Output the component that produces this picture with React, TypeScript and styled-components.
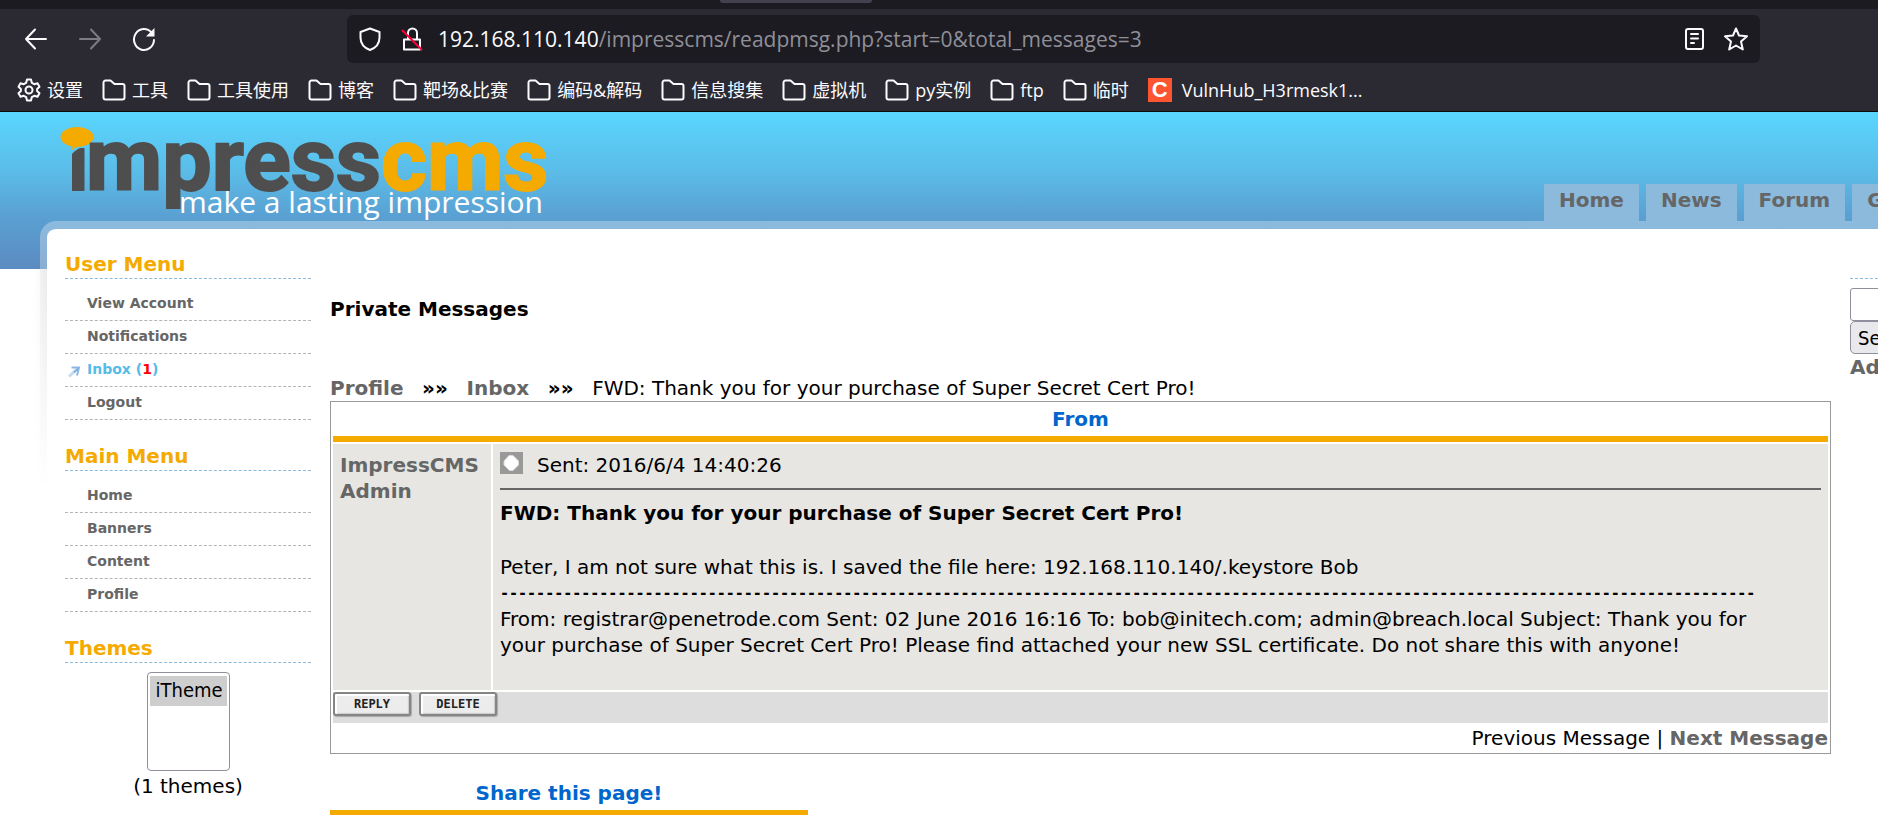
import React from "react";
import styled, { createGlobalStyle, css } from "styled-components";

const sans = `"DejaVu Sans", Verdana, sans-serif`;
const compact = `"DejaVu Sans Condensed", Tahoma, "DejaVu Sans", sans-serif`;
const chromeFont = `"Open Sans", "Noto Sans CJK SC", sans-serif`;

const GlobalStyle = createGlobalStyle`
  *, *::before, *::after { box-sizing: border-box; }
  html { overflow: hidden; background: #fff; }
  body { margin: 0; font: 20px/26px ${sans}; color: #000; background: #fff; }
  h1, h2, h3, p, ul { margin: 0; padding: 0; }
  a { color: inherit; text-decoration: none; }
  ul { list-style: none; }
`;

/* Browser frame */
const Chrome = styled.header`
  background: #2b2a33;
  border-bottom: 1px solid #0c0c0d;
  color: #fbfbfe;
  font-family: ${chromeFont};
`;
const TabStrip = styled.div`
  display: flex;
  justify-content: center;
  height: 9px;
  padding-right: 286px;
  background: #1c1b22;
`;
const TabEdge = styled.div`
  width: 152px;
  height: 3px;
  background: #42414d;
  border-radius: 0 0 4px 4px;
`;
const Toolbar = styled.div`
  display: flex;
  align-items: center;
  padding: 6px 118px 6px 20px;
`;
const NavButtons = styled.div`
  display: flex;
  gap: 22px;
  width: 327px;
`;
const IconButton = styled.button<{ $dim?: boolean }>`
  display: flex;
  flex: none;
  align-items: center;
  justify-content: center;
  width: 32px;
  height: 32px;
  padding: 0;
  border: 0;
  background: none;
  color: ${(p) => (p.$dim ? "#7d7c84" : "#fbfbfe")};
`;
const AddressBar = styled.div`
  display: flex;
  flex: 1;
  align-items: center;
  gap: 10px;
  height: 48px;
  padding: 0 8px 0 7px;
  border-radius: 6px;
  background: #1c1b22;
`;
const Address = styled.div`
  flex: 1;
  font-size: 21px;
  color: #8f8f98;
  white-space: nowrap;
`;
const Host = styled.span`
  color: #fbfbfe;
`;
const Bookmarks = styled.nav`
  display: flex;
  align-items: center;
  gap: 19px;
  height: 42px;
  padding: 0 17px;
`;
const Bookmark = styled.a`
  display: flex;
  align-items: center;
  gap: 6px;
  font-size: 18px;
  line-height: 24px;
  white-space: nowrap;
`;
const SiteBadge = styled.span`
  display: flex;
  align-items: center;
  justify-content: center;
  width: 24px;
  height: 24px;
  margin-right: 4px;
  background: #fc5531;
  color: #fff;
  font: bold 22px/24px "Liberation Sans", sans-serif;
`;

/* Site */
const Site = styled.div`
  overflow: hidden;
  background: linear-gradient(#59d6ff, #5bbce8 38%, #5a9fd1 68%, #5b8bc1) 0 0 / 100% 157px no-repeat;
`;
const Banner = styled.div`
  display: flex;
  justify-content: space-between;
  height: 109px;
  padding-left: 60px;
`;
const LogoArt = styled.svg`
  display: block;
  overflow: visible;
`;
const SiteTabs = styled.nav`
  display: flex;
  flex: 0 0 334px;
  align-items: flex-end;
  gap: 7px;
  overflow: hidden;
`;
const SiteTab = styled.a`
  height: 37px;
  padding: 3px 15px 0;
  background: #8bbadd;
  color: #666;
  font-weight: bold;
`;
const Panel = styled.main`
  position: relative;
  display: grid;
  grid-template-columns: 246px minmax(0, 1fr) 28px;
  column-gap: 19px;
  margin-left: 40px;
  padding: 22px 0 0 18px;
  border: solid rgba(255, 255, 255, 0.3);
  border-width: 8px 0 0 7px;
  border-top-left-radius: 16px;
  background: #fff padding-box;
  &::before {
    content: "";
    position: absolute;
    top: 40px;
    left: -13px;
    width: 13px;
    height: 220px;
    background:
      linear-gradient(rgba(90, 90, 100, 0.05), rgba(90, 90, 100, 0.05)) right / 7px 100% no-repeat,
      linear-gradient(to left, rgba(90, 90, 100, 0.08), rgba(90, 90, 100, 0));
    mask-image: linear-gradient(#000, transparent);
  }
`;
const Block = styled.section`
  margin-bottom: 23px;
`;
const BlockTitle = styled.h2`
  height: 28px;
  border-bottom: 1px dashed #8bbadd;
  color: #f5aa00;
  font-size: 20px;
  line-height: 26px;
`;
const MenuList = styled.ul`
  padding-top: 9px;
`;
const MenuItem = styled.li<{ $active?: boolean }>`
  display: flex;
  align-items: center;
  height: 33px;
  padding: 0 0 2px 3px;
  border-bottom: 1px dashed #b4b4b4;
  color: ${(p) => (p.$active ? "#55bbe8" : "#666")};
  font-size: 14px;
  font-weight: bold;
`;
const Marker = styled.span`
  display: flex;
  width: 19px;
  padding-top: 5px;
`;
const Count = styled.span`
  color: #f00;
`;
const ThemePicker = styled.label`
  display: flex;
  flex-direction: column;
  align-items: center;
  padding-top: 9px;
`;
const ThemeSelect = styled.select`
  width: 83px;
  height: 99px;
  margin-bottom: 2px;
  padding: 3px 2px;
  border: 1px solid #8f8f9d;
  border-radius: 4px;
  background: #fff;
  overflow: hidden;
  font: 20px/26px ${compact};
  outline: none;
  option {
    min-height: 30px;
    padding: 2px 6px;
    color: #000;
  }
  option:checked {
    background: #cecece linear-gradient(#cecece, #cecece);
  }
`;
const Center = styled.div`
  min-width: 0;
`;
const PageTitle = styled.h1`
  padding: 45px 0 53px;
  font-size: 20px;
  line-height: 26px;
`;
const Crumbs = styled.nav`
  display: flex;
  gap: 15px;
  height: 26px;
  white-space: nowrap;
`;
const Separator = styled.b`
  width: 33px;
  text-align: center;
`;
const StrongLink = styled.a`
  color: #666;
  font-weight: bold;
`;
const Message = styled.table`
  width: 100%;
  border: 1px solid #999;
  border-spacing: 2px;
`;
const cell = css`
  padding: 8px 7px;
  background: #e7e6e2;
  text-align: left;
  vertical-align: top;
`;
const TitleCell = styled.th`
  height: 38px;
  padding: 2px 0 4px;
  border-bottom: 6px solid #f5aa00;
  color: #06c;
`;
const FromCell = styled.td`
  ${cell}
  width: 158px;
`;
const BodyCell = styled.td`
  ${cell}
  height: 246px;
`;
const SentLine = styled.div`
  display: flex;
  gap: 14px;
  height: 38px;
  border-bottom: 2px solid #666;
`;
const Subject = styled.h3`
  padding: 10px 0 28px;
  font-size: 20px;
  line-height: 26px;
`;
const Text = styled.p`
  padding-right: 32px;
`;
const Rule = styled.div`
  overflow: hidden;
  font: bold 15px/26px "DejaVu Sans Mono", monospace;
  white-space: nowrap;
`;
const ActionCell = styled.td`
  height: 31px;
  padding: 0;
  background: #ddd;
  vertical-align: top;
`;
const Actions = styled.div`
  display: flex;
  gap: 8px;
`;
const ActionButton = styled.button`
  width: 78px;
  height: 24px;
  padding: 0;
  border: 2px solid #858585;
  border-radius: 3px;
  background: #ececec;
  box-shadow: inset 2px 2px 1px #fff, inset -1px -1px 1px #ccc, 1px 1px 1px #aaa;
  color: #222;
  font: bold 12px/18px "DejaVu Sans Mono", monospace;
`;
const Pager = styled.td`
  padding: 0;
  text-align: right;
`;
const Share = styled.h2`
  max-width: 478px;
  margin-top: 26px;
  padding-bottom: 4px;
  border-bottom: 6px solid #f5aa00;
  color: #06c;
  font-size: 20px;
  line-height: 26px;
  text-align: center;
`;
const Search = styled.form`
  display: flex;
  flex-direction: column;
  align-items: flex-start;
  width: 246px;
`;
const SearchTitle = styled(BlockTitle)`
  width: 100%;
  margin-bottom: 9px;
`;
const SearchInput = styled.input`
  width: 200px;
  height: 33px;
  border: 1px solid #8f8f9d;
  border-radius: 3px;
`;
const SearchButton = styled.button`
  height: 33px;
  padding: 0 7px;
  border: 1px solid #8f8f9d;
  border-radius: 5px;
  background: #e9e9ed;
  font: 20px/26px ${compact};
`;

const Stroke: React.FC<{ size: number; children: React.ReactNode }> = ({ size, children }) => (
  <svg width={size} height={size} viewBox={`0 0 ${size} ${size}`} fill="none" stroke="currentColor"
    strokeWidth="2" strokeLinecap="round" strokeLinejoin="round" aria-hidden="true">
    {children}
  </svg>
);

const BackIcon = () => (
  <Stroke size={24}><path d="M22 12H2M11 2.5 2 12l9 9.5" /></Stroke>
);
const ForwardIcon = () => (
  <Stroke size={24}><path d="M2 12h20M13 2.5 22 12l-9 9.5" /></Stroke>
);
const ReloadIcon = () => (
  <Stroke size={26}>
    <path d="M20.5 6.5A10 10.5 0 1 0 23 14" />
    <path d="M23.5 2v8.500H15z" fill="currentColor" stroke="none" />
  </Stroke>
);
const ShieldIcon = () => (
  <Stroke size={24}><path d="M12 1.500 21.500 5v5.500c0 6-4 10.500-9.500 12.500C6.500 21 2.500 16.500 2.500 10.500V5z" /></Stroke>
);
const LockIcon = () => (
  <Stroke size={24}>
    <path d="M4 12.500h16V22.500H4zM8 12V6a4.500 4.500 0 0 1 9 0v6" />
    <path d="M2.500 3.500 21.500 22.500" stroke="#ff0039" />
  </Stroke>
);
const ReaderIcon = () => (
  <Stroke size={24}>
    <rect x="4" y="2" width="17" height="20" rx="2" />
    <path d="M9 7h7M9 11.500h7M9 16h3" />
  </Stroke>
);
const StarIcon = () => (
  <Stroke size={26}>
    <path d="M13 2.500 16 9.500l8 .8-6 5.200 1.800 8L13 19.500l-6.800 4 1.800-8-6-5.200 8-.8z" />
  </Stroke>
);
const GearIcon = () => (
  <Stroke size={24}>
    <circle cx="12" cy="12" r="3.500" />
    <path d="M10 1.500h4l.8 3.300 2.500 1.400 3.200-1 2 3.500-2.400 2.300v2l2.400 2.300-2 3.500-3.200-1-2.500 1.400-.8 3.300h-4l-.8-3.300-2.500-1.400-3.200 1-2-3.500L3.900 13v-2L1.500 8.700l2-3.500 3.200 1 2.500-1.400z" />
  </Stroke>
);
const FolderIcon = () => (
  <Stroke size={24}>
    <path d="M1.500 4.500a2 2 0 0 1 2-2h5l4 3.500h8a2 2 0 0 1 2 2v11.500a2 2 0 0 1-2 2h-17a2 2 0 0 1-2-2z" />
  </Stroke>
);
const ArrowMark = () => (
  <svg width="13" height="13" viewBox="0 0 13 13" fill="none" aria-hidden="true">
    <path d="M1 11.500 9 4" stroke="#c3daf2" strokeWidth="3" />
    <path d="M3.500 2.500H11L9 10.500" stroke="#8db7e4" strokeWidth="2" />
    <path d="M6 7.500 10 3.500" stroke="#6fa3db" strokeWidth="1.500" />
  </svg>
);
const PostIcon = () => (
  <svg width="23" height="22" viewBox="0 0 23 22" aria-hidden="true">
    <path fill="#999" d="M0 0h23v22H0z" />
    <path fill="#fff" stroke="#d8dcdc" d="M9 3.500h4L18.500 9v4L13 18.500H9.500L4 13V9z" />
  </svg>
);

const Logo = () => (
  <LogoArt width="500" height="109" viewBox="0 0 500 109" role="img" aria-label="impresscms">
    <ellipse cx="17" cy="25" rx="16.500" ry="10" fill="#f5aa00" />
    <path d="M12 33h9c-2 1-7 3-10 6 1-2 2-3.500 1-6z" fill="#f5aa00" />
    <path d="M12 79V42c1.500-2 6-5.500 9-6h3.500v43z" fill="#4e4e4e" />
    <text x="26" y="78" fill="#4e4e4e" stroke="#4e4e4e" strokeWidth="2" fontFamily="Roboto, sans-serif" fontWeight="700" fontSize="88">
      mpress<tspan fill="#f5aa00" stroke="#f5aa00">cms</tspan>
    </text>
    <text x="119" y="101" fill="#fff" fontFamily='"Open Sans", sans-serif' fontSize="30">make a lasting impression</text>
  </LogoArt>
);

const bookmarks = ["工具", "工具使用", "博客", "靶场&比赛", "编码&解码", "信息搜集", "虚拟机", "py实例", "ftp", "临时"];
const siteTabs = ["Home", "News", "Forum", "Gallery"];
const dashes = "-".repeat(139);

const Menu: React.FC<{ title: string; items: string[]; active?: string; count?: number }> = ({ title, items, active, count }) => (
  <Block>
    <BlockTitle>{title}</BlockTitle>
    <MenuList>
      {items.map((item) => (
        <MenuItem key={item} $active={item === active}>
          <Marker>{item === active && <ArrowMark />}</Marker>
          <a href="#">{item}{item === active && <> (<Count>{count}</Count>)</>}</a>
        </MenuItem>
      ))}
    </MenuList>
  </Block>
);

export default function App() {
  return (
    <>
      <GlobalStyle />
      <Chrome>
        <TabStrip><TabEdge /></TabStrip>
        <Toolbar>
          <NavButtons>
            <IconButton aria-label="Back"><BackIcon /></IconButton>
            <IconButton aria-label="Forward" $dim><ForwardIcon /></IconButton>
            <IconButton aria-label="Reload"><ReloadIcon /></IconButton>
          </NavButtons>
          <AddressBar>
            <IconButton aria-label="Tracking protection"><ShieldIcon /></IconButton>
            <IconButton aria-label="Connection not secure"><LockIcon /></IconButton>
            <Address><Host>192.168.110.140</Host>/impresscms/readpmsg.php?start=0&amp;total_messages=3</Address>
            <IconButton aria-label="Reader view"><ReaderIcon /></IconButton>
            <IconButton aria-label="Bookmark this page"><StarIcon /></IconButton>
          </AddressBar>
        </Toolbar>
        <Bookmarks>
          <Bookmark href="#"><GearIcon />设置</Bookmark>
          {bookmarks.map((b) => (
            <Bookmark href="#" key={b}><FolderIcon />{b}</Bookmark>
          ))}
          <Bookmark href="#"><SiteBadge>C</SiteBadge>VulnHub_H3rmesk1...</Bookmark>
        </Bookmarks>
      </Chrome>
      <Site>
        <Banner>
          <Logo />
          <SiteTabs>
            {siteTabs.map((t) => <SiteTab href="#" key={t}>{t}</SiteTab>)}
          </SiteTabs>
        </Banner>
        <Panel>
          <aside>
            <Menu title="User Menu" items={["View Account", "Notifications", "Inbox", "Logout"]} active="Inbox" count={1} />
            <Menu title="Main Menu" items={["Home", "Banners", "Content", "Profile"]} />
            <Block>
              <BlockTitle>Themes</BlockTitle>
              <ThemePicker>
                <ThemeSelect size={3} defaultValue="iTheme"><option>iTheme</option></ThemeSelect>
                (1 themes)
              </ThemePicker>
            </Block>
          </aside>
          <Center>
            <PageTitle>Private Messages</PageTitle>
            <Crumbs>
              <StrongLink href="#">Profile</StrongLink>
              <Separator>»»</Separator>
              <StrongLink href="#">Inbox</StrongLink>
              <Separator>»»</Separator>
              <span>FWD: Thank you for your purchase of Super Secret Cert Pro!</span>
            </Crumbs>
            <Message>
              <thead>
                <tr><TitleCell colSpan={2}>From</TitleCell></tr>
              </thead>
              <tbody>
                <tr>
                  <FromCell><StrongLink href="#">ImpressCMS Admin</StrongLink></FromCell>
                  <BodyCell>
                    <SentLine><PostIcon /><span>Sent: 2016/6/4 14:40:26</span></SentLine>
                    <Subject>FWD: Thank you for your purchase of Super Secret Cert Pro!</Subject>
                    <Text>Peter, I am not sure what this is. I saved the file here: 192.168.110.140/.keystore Bob</Text>
                    <Rule>{dashes}</Rule>
                    <Text>From: registrar@penetrode.com Sent: 02 June 2016 16:16 To: bob@initech.com; admin@breach.local Subject: Thank you for your purchase of Super Secret Cert Pro! Please find attached your new SSL certificate. Do not share this with anyone!</Text>
                  </BodyCell>
                </tr>
                <tr>
                  <ActionCell colSpan={2}>
                    <Actions>
                      <ActionButton>REPLY</ActionButton>
                      <ActionButton>DELETE</ActionButton>
                    </Actions>
                  </ActionCell>
                </tr>
                <tr>
                  <Pager colSpan={2}>Previous Message | <StrongLink href="#">Next Message</StrongLink></Pager>
                </tr>
              </tbody>
            </Message>
            <Share>Share this page!</Share>
          </Center>
          <Search onSubmit={(e) => e.preventDefault()}>
            <SearchTitle aria-label="Search" />
            <SearchInput aria-label="Search terms" />
            <SearchButton>Search</SearchButton>
            <StrongLink href="#">Advanced Search</StrongLink>
          </Search>
        </Panel>
      </Site>
    </>
  );
}
